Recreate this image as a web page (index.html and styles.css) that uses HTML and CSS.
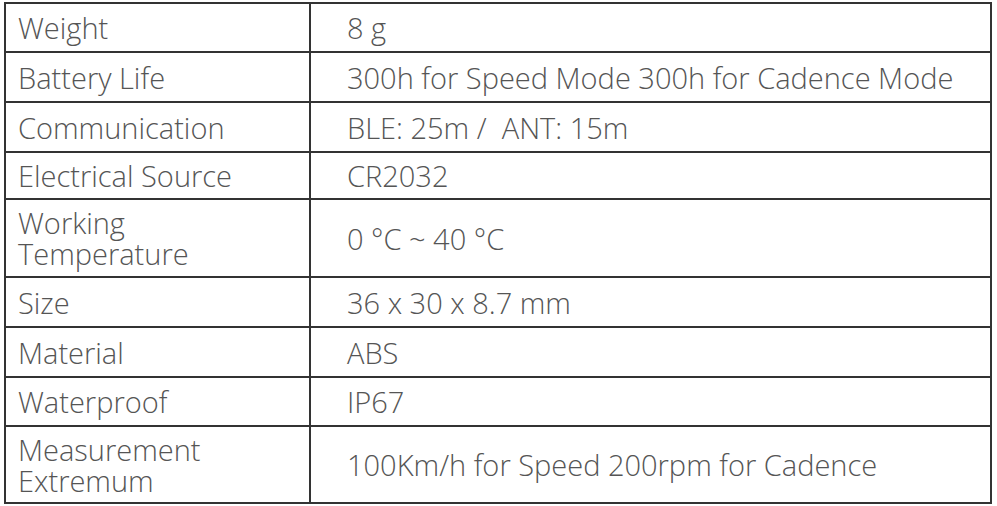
FILE: index.html
```html
<!DOCTYPE html>
<html lang="en">
<head>
<meta charset="utf-8">
<title>Specifications</title>
<link rel="stylesheet" href="styles.css">
</head>
<body>
<table class="spec">
  <tbody>
    <tr class="h49"><td class="key">Weight</td><td class="val">8 g</td></tr>
    <tr class="h50"><td class="key">Battery Life</td><td class="val">300h for Speed Mode 300h for Cadence Mode</td></tr>
    <tr class="h50"><td class="key">Communication</td><td class="val">BLE: 25m /&nbsp; ANT: 15m</td></tr>
    <tr class="h47"><td class="key">Electrical Source</td><td class="val">CR2032</td></tr>
    <tr class="h78"><td class="key">Working<br>Temperature</td><td class="val">0 °C ~ 40 °C</td></tr>
    <tr class="h50"><td class="key">Size</td><td class="val">36 x 30 x 8.7 mm</td></tr>
    <tr class="h50"><td class="key">Material</td><td class="val">ABS</td></tr>
    <tr class="h49"><td class="key">Waterproof</td><td class="val">IP67</td></tr>
    <tr class="h77"><td class="key">Measurement<br>Extremum</td><td class="val">100Km/h for Speed 200rpm for Cadence</td></tr>
  </tbody>
</table>
</body>
</html>
```

FILE: styles.css
```css
html, body {
  margin: 0;
  padding: 0;
  background: #ffffff;
}

body {
  padding: 2px 0 0 4px;
}

.spec {
  border-collapse: separate;
  border-spacing: 0;
  border-top: 2px solid #333333;
  border-left: 2px solid #333333;
  width: 988px;
  table-layout: fixed;
  font-family: "Open Sans", "Liberation Sans", sans-serif;
  font-weight: 300;
  font-size: 29px;
  line-height: 31px;
  color: #555555;
}

.spec td {
  border-right: 2px solid #333333;
  border-bottom: 2px solid #333333;
  vertical-align: middle;
  padding: 0;
  white-space: nowrap;
}

.spec .key {
  width: 291px;
  padding-left: 12px;
}

.spec .val {
  padding-left: 36px;
}

.h47 td { height: 45px; }
.h49 td { height: 47px; }
.h50 td { height: 48px; }
.h77 td { height: 75px; }
.h78 td { height: 76px; }
```
